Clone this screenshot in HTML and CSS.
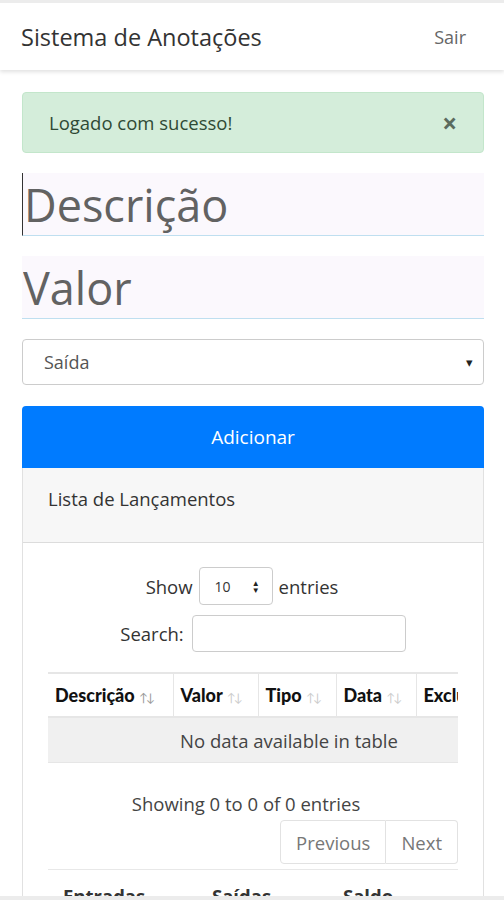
FILE: index.html
```html
<!DOCTYPE html>
<html lang="pt-BR">
<head>
  <meta charset="UTF-8">
  <meta name="viewport" content="width=device-width, initial-scale=1.0">
  <title>Sistema de Anotações</title>
  <link rel="stylesheet" href="styles.css">
</head>
<body>
  <nav class="navbar">
    <span class="brand">Sistema de Anotações</span>
    <a class="logout" href="#">Sair</a>
  </nav>

  <div class="container">
    <div class="alert">
      <span>Logado com sucesso!</span>
      <span class="close">&times;</span>
    </div>

    <input class="big-input first" type="text" placeholder="Descrição">
    <input class="big-input" type="text" placeholder="Valor">

    <div class="select-box">
      <span>Saída</span>
      <span class="caret">&#9662;</span>
    </div>

    <button class="btn-add">Adicionar</button>

    <div class="card">
      <div class="card-header">Lista de Lançamentos</div>
      <div class="card-body">
        <div class="dt-length">
          Show
          <span class="length-select"><span>10</span><span class="spin">&#9650;<br>&#9660;</span></span>
          entries
        </div>
        <div class="dt-search">
          Search:
          <span class="search-input"></span>
        </div>

        <div class="table-wrap">
          <table>
            <thead>
              <tr>
                <th class="c1">Descrição <span class="sort on">&uarr;&darr;</span></th>
                <th class="c2">Valor <span class="sort">&uarr;&darr;</span></th>
                <th class="c3">Tipo <span class="sort">&uarr;&darr;</span></th>
                <th class="c4">Data <span class="sort">&uarr;&darr;</span></th>
                <th class="c5">Excluir</th>
              </tr>
            </thead>
            <tbody>
              <tr>
                <td class="empty" colspan="5"><span class="empty-text">No data available in table</span></td>
              </tr>
            </tbody>
          </table>
        </div>

        <div class="dt-info">Showing 0 to 0 of 0 entries</div>
        <div class="pager">
          <span class="page-btn">Previous</span>
          <span class="page-btn">Next</span>
        </div>

        <div class="totals">
          <span class="t1">Entradas</span>
          <span class="t2">Saídas</span>
          <span class="t3">Saldo</span>
        </div>
      </div>
    </div>
  </div>
  <div class="bottom-bar"></div>
</body>
</html>
```

FILE: styles.css
```css
body {
  margin: 0;
  font-family: "Open Sans", sans-serif;
  background-color: #fff;
  color: #212529;
  border-top: 3px solid #ececec;
  height: 897px;
  overflow: hidden;
}

.navbar {
  height: 67px;
  display: flex;
  justify-content: space-between;
  align-items: center;
  padding: 0 38px 0 21px;
  box-shadow: 0 2px 4px rgba(0, 0, 0, 0.12);
  position: relative;
}

.brand {
  font-size: 23.5px;
  color: #333;
}

.logout {
  font-size: 18px;
  color: #666;
  text-decoration: none;
}

.container {
  padding: 22px 20px 0 22px;
}

.alert {
  height: 61px;
  background-color: #d4edda;
  border: 1px solid #c3e6cb;
  border-radius: 4px;
  box-sizing: border-box;
  display: flex;
  justify-content: space-between;
  align-items: center;
  padding: 0 26px 0 26px;
  font-size: 18.5px;
  color: #2f4a35;
}

.close {
  font-size: 26px;
  font-weight: bold;
  color: #5b6b5e;
}

.big-input {
  display: block;
  width: 100%;
  height: 63px;
  margin-top: 20px;
  box-sizing: border-box;
  border: none;
  border-bottom: 1px solid #bfdff0;
  background-color: #fbf8fd;
  font-family: "Open Sans", sans-serif;
  font-size: 45px;
  padding: 0 0 0 1px;
  color: #555;
  outline: none;
}

.big-input::placeholder {
  color: #626262;
}

.big-input.first {
  border-left: 1px solid #333;
}

.select-box {
  height: 46px;
  margin-top: 20px;
  box-sizing: border-box;
  border: 1px solid #ccc;
  border-radius: 4px;
  display: flex;
  justify-content: space-between;
  align-items: center;
  padding: 0 10px 0 21px;
  font-size: 18px;
  color: #555;
}

.caret {
  font-size: 13px;
  color: #222;
}

.btn-add {
  display: block;
  width: 100%;
  height: 62px;
  margin-top: 21px;
  border: none;
  border-radius: 4px 4px 0 0;
  background-color: #007bff;
  color: #fff;
  font-family: "Open Sans", sans-serif;
  font-size: 19px;
}

.card {
  border: 1px solid #e1e1e1;
  border-top: none;
}

.card-header {
  height: 75px;
  background-color: #f7f7f7;
  border-bottom: 1px solid #dcdcdc;
  padding: 18px 25px 0;
  box-sizing: border-box;
  font-size: 18.5px;
  color: #333;
}

.card-body {
  padding: 24px 25px 0;
  color: #333;
  font-size: 18.5px;
}

.dt-length {
  display: flex;
  justify-content: center;
  align-items: center;
  gap: 6px;
  margin-left: -22px;
}

.length-select {
  width: 74px;
  height: 38px;
  box-sizing: border-box;
  border: 1px solid #ccc;
  border-radius: 4px;
  display: flex;
  align-items: center;
  justify-content: space-between;
  padding: 0 12px 0 15px;
  font-size: 14px;
}

.spin {
  font-size: 8px;
  line-height: 7px;
  color: #222;
}

.dt-search {
  display: flex;
  justify-content: center;
  align-items: center;
  gap: 8px;
  margin-top: 10px;
  margin-left: 20px;
}

.search-input {
  width: 214px;
  height: 37px;
  box-sizing: border-box;
  border: 1px solid #ccc;
  border-radius: 4px;
}

.table-wrap {
  margin-top: 20px;
  overflow: hidden;
}

table {
  border-collapse: collapse;
  width: 470px;
}

th {
  font-family: Lato, sans-serif;
  font-weight: 900;
  font-size: 18px;
  text-align: left;
  height: 44px;
  padding: 0 4px 0 7px;
  border-top: 2px solid #e6e6e6;
  border-bottom: 2px solid #e6e6e6;
  border-right: 1px solid #e6e6e6;
  white-space: nowrap;
  color: #111;
  box-sizing: border-box;
}

.c1 { width: 125px; }
.c2 { width: 85px; }
.c3 { width: 78px; }
.c4 { width: 80px; }

.sort {
  font-weight: normal;
  font-size: 12px;
  color: #ccc;
  letter-spacing: -2px;
}

.sort.on {
  color: #999;
}

.empty {
  height: 44px;
  background-color: #f0f0f0;
  border-bottom: 1px solid #e6e6e6;
  padding: 0;
}

.empty-text {
  display: block;
  width: 410px;
  text-align: center;
  color: #444;
  margin-left: 36px;
}

.dt-info {
  text-align: center;
  margin-top: 28px;
  margin-left: -14px;
  color: #444;
}

.pager {
  display: flex;
  justify-content: flex-end;
  margin-top: 4px;
}

.page-btn {
  height: 44px;
  box-sizing: border-box;
  display: flex;
  align-items: center;
  padding: 0 15px;
  border: 1px solid #e2e2e2;
  color: #777;
}

.page-btn:first-child {
  border-radius: 4px 0 0 4px;
}

.page-btn:last-child {
  border-left: none;
  border-radius: 0 4px 4px 0;
}

.totals {
  border-top: 1px solid #e8e8e8;
  margin-top: 5px;
  padding: 13px 0 0 15px;
  font-weight: bold;
  display: flex;
}

.t1 { width: 149px; }
.t2 { width: 131px; }

.bottom-bar {
  position: fixed;
  left: 0;
  right: 0;
  bottom: 0;
  height: 4px;
  background-color: #ececec;
}
```
